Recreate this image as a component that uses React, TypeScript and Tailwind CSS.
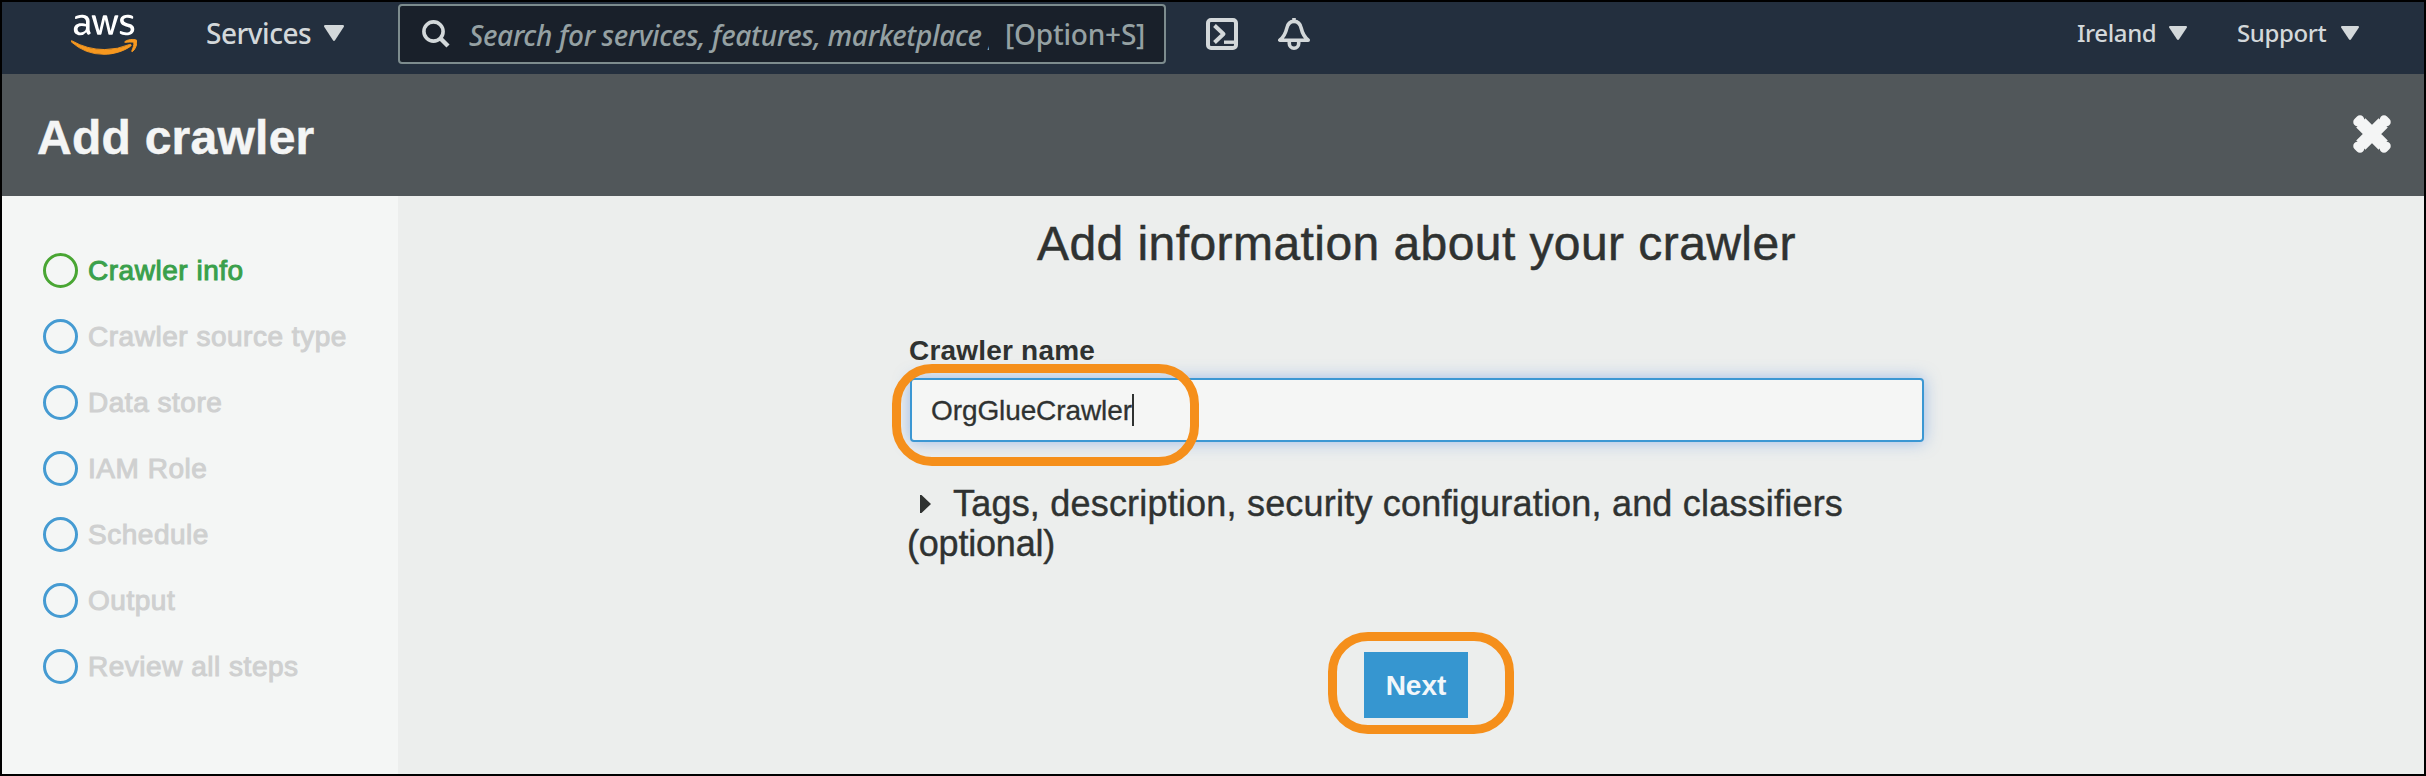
import React from "react";
import { FaAws } from "react-icons/fa";

const steps = [
  "Crawler info",
  "Crawler source type",
  "Data store",
  "IAM Role",
  "Schedule",
  "Output",
  "Review all steps",
];

function Caret({ className }: { className: string }) {
  return (
    <svg viewBox="0 0 20 16" className={className} fill="currentColor" preserveAspectRatio="none">
      <path d="M1.2 0H18.8Q20.6 .3 19.7 2L11.2 15Q10 16.8 8.8 15L.3 2Q-.6 .3 1.2 0Z" />
    </svg>
  );
}

function NavBar() {
  return (
    <nav className="h-[72px] bg-[#232f3e] font-['Noto_Sans',sans-serif] text-[#d3d8da]">
      <div className="flex h-16 items-center">
        <div className="ml-[69px] h-[53px] w-[66px] shrink-0">
          <div className="h-[30px] overflow-hidden">
            <FaAws className="h-[53px] w-[66px] text-white" />
          </div>
          <div className="flex h-[23px] items-end overflow-hidden">
            <FaAws className="h-[53px] w-[66px] shrink-0 stroke-current stroke-[9px] text-[#f7981f]" />
          </div>
        </div>
        <div className="ml-[69px] flex w-[192px] shrink-0 items-center pb-[2px] text-[28px] leading-10 tracking-[-0.5px]">
          <span className="w-[118px] font-medium">Services</span>
          <Caret className="h-4 w-5 shrink-0" />
        </div>
        <div className="flex h-[60px] w-[768px] shrink-0 items-center rounded-[4px] border-2 border-[#7d8c8e] bg-[#19202a] text-[28px] text-[#95a1a3]">
          <svg viewBox="0 0 28 28" className="ml-[22px] h-7 w-7 shrink-0 text-[#d3d8da]" fill="none" stroke="currentColor">
            <circle cx="11.5" cy="11.5" r="9.6" strokeWidth="3.6" />
            <path d="M18 18L26 26" strokeWidth="4.4" />
          </svg>
          <div className="ml-[19px] w-[520px] shrink-0 overflow-hidden pt-[2px] leading-10 font-medium tracking-[-0.33px] whitespace-nowrap italic">
            Search for services, features, marketplace ,
          </div>
          <span className="ml-[16px] leading-10 font-medium tracking-[-0.2px] whitespace-nowrap">[Option+S]</span>
        </div>
        <svg viewBox="0 0 32 32" className="ml-10 h-8 w-8 shrink-0" fill="none" stroke="currentColor" strokeWidth="4">
          <rect x="2" y="2" width="28" height="28" rx="3" />
          <path d="M8.5 7.5L17.5 16L8.5 24.5" strokeLinejoin="round" />
          <path d="M18 24.2H28" strokeWidth="3.4" />
        </svg>
        <svg viewBox="0 0 32 32" className="ml-10 h-8 w-8 shrink-0" fill="none" stroke="currentColor" strokeWidth="3.6" strokeLinejoin="round">
          <path d="M16 0V3" />
          <path d="M1.800 22.200H30.200C25.800 18.500 24.400 15.500 23.300 10.500C22.300 5.500 20 3.400 16 3.400S9.700 5.500 8.700 10.500C7.600 15.500 6.200 18.500 1.800 22.200Z" />
          <path d="M11.300 23V25.500A4.700 4.700 0 0 0 20.700 25.500V23" />
        </svg>
        <div className="ml-auto flex shrink-0 items-center pb-[3px] text-[24px] leading-9 font-medium tracking-[-0.4px]">
          <span className="w-[92px]">Ireland</span>
          <Caret className="mt-[1px] h-[14px] w-[18px]" />
          <span className="ml-[50px] w-[104px]">Support</span>
          <Caret className="mt-[1px] mr-[65px] h-[14px] w-[18px]" />
        </div>
      </div>
    </nav>
  );
}

function TitleBar() {
  return (
    <header className="flex h-[122px] items-center justify-between bg-[#51575a] pr-[33px] pl-[35px] text-[#f4f5f5]">
      <h1 className="pt-[6px] text-[48px] leading-[56px] font-bold tracking-[0.25px] [-webkit-text-stroke:0.5px_#f4f5f5]">Add crawler</h1>
      <svg viewBox="0 0 38 38" className="mb-[2px] h-[38px] w-[38px]" fill="none" stroke="currentColor">
        <path d="M7.800 7.800L30.200 30.200M30.200 7.800L7.800 30.200" strokeWidth="13" />
        <path
          d="M7 4.500L4.500 7M31 4.500L33.500 7M7 33.500L4.500 31M31 33.500L33.500 31"
          strokeWidth="8.500"
          strokeLinecap="round"
        />
      </svg>
    </header>
  );
}

function Sidebar() {
  return (
    <aside className="w-[396px] shrink-0 bg-[#f4f6f5] pt-[41.5px] pl-[41px]">
      <ul>
        {steps.map((step, i) => (
          <li key={step} className="flex h-[66px] items-center">
            <span
              className={
                i === 0
                  ? "h-[35px] w-[35px] rounded-full border-[3px] border-[#49a633]"
                  : "h-[35px] w-[35px] rounded-full border-[3px] border-[#459bd2]"
              }
            />
            <span
              className={
                i === 0
                  ? "ml-[10px] pt-[1px] text-[28px] leading-8 tracking-[0.52px] text-[#3aa04b] [-webkit-text-stroke:1px_#3aa04b]"
                  : "ml-[10px] pt-[1px] text-[28px] leading-8 tracking-[0.52px] text-[#cfd0d0] [-webkit-text-stroke:1px_#cfd0d0]"
              }
            >
              {step}
            </span>
          </li>
        ))}
      </ul>
    </aside>
  );
}

function CrawlerForm() {
  return (
    <main className="flex-1 bg-[#eceeed] pt-[24px] pl-[512px] text-[#2f3231]">
      <div className="w-[1014px]">
        <h2 className="-ml-[1px] text-center text-[48px] leading-[48px] tracking-[0.43px] whitespace-nowrap [-webkit-text-stroke:0.5px_#2f3231]">
          Add information about your crawler
        </h2>
        <div className="mt-[67px] -ml-[1px] text-[28px] leading-8 font-bold tracking-[0.2px]">Crawler name</div>
        <div className="relative mt-[11px] flex h-16 items-center rounded-[4px] border-2 border-[#3b97d3] bg-[#f5f6f5] pl-[19px] shadow-[0_0_16px_rgba(75,135,225,0.5)]">
          <span className="pt-[2px] text-[28px] leading-8 tracking-[-0.1px] [-webkit-text-stroke:0.3px_#2f3231]">OrgGlueCrawler</span>
          <span className="h-8 w-[2px] bg-[#2f3231]" />
          <div className="pointer-events-none absolute top-[-16px] left-[-20px] h-[102px] w-[307px] rounded-[40px] border-[9px] border-[#f58f1b]" />
        </div>
        <div className="mt-[42px] ml-[-3px] text-[36px] leading-10 [-webkit-text-stroke:0.4px_#2f3231]">
          <div className="flex items-center tracking-[0.2px] whitespace-nowrap">
            <svg viewBox="0 0 11 18" className="mr-[22px] ml-[13px] h-[18px] w-[11px]" fill="currentColor">
              <path d="M0 0H1.500L11 9L1.500 18H0Z" />
            </svg>
            Tags, description, security configuration, and classifiers
          </div>
          <div className="tracking-[-0.2px]">(optional)</div>
        </div>
        <div className="relative mt-[88px] ml-[454px] w-[104px]">
          <button className="block h-[66px] w-[104px] bg-[#3696d0] pt-[2px] text-[28px] leading-8 font-bold text-[#f2f7fa]">
            Next
          </button>
          <div className="pointer-events-none absolute top-[-20px] left-[-36px] h-[102px] w-[186px] rounded-[40px] border-[9px] border-[#f58f1b]" />
        </div>
      </div>
    </main>
  );
}

export default function App() {
  return (
    <div className="flex h-[776px] w-[2426px] flex-col overflow-hidden border-2 border-black font-['Liberation_Sans',Arial,sans-serif]">
      <NavBar />
      <TitleBar />
      <div className="flex flex-1">
        <Sidebar />
        <CrawlerForm />
      </div>
    </div>
  );
}
